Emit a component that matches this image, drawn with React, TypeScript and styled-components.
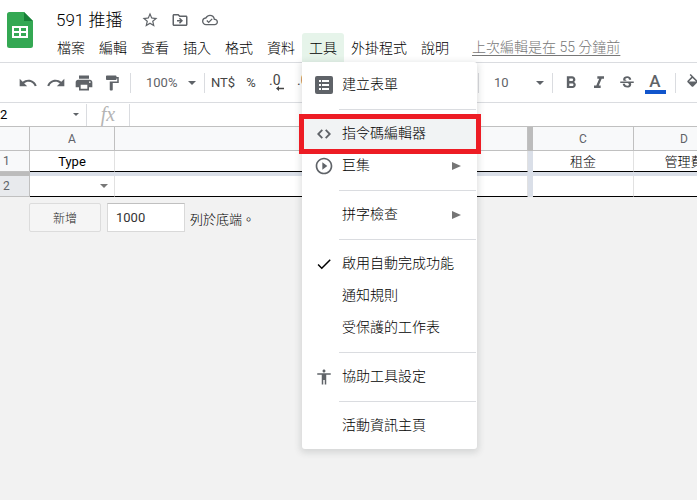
import React from "react";
import styled, { createGlobalStyle } from "styled-components";
import {
  MdAccessibility,
  MdCheck,
  MdFormatBold,
  MdFormatItalic,
  MdFormatPaint,
  MdOutlineCloudDone,
  MdOutlineDriveFileMove,
  MdPlayCircleOutline,
  MdPrint,
  MdRedo,
  MdStarBorder,
  MdStrikethroughS,
  MdUndo,
} from "react-icons/md";

const GlobalStyle = createGlobalStyle`
  * { box-sizing: border-box; }
  html, body, #root { height: 100%; }
  body {
    margin: 0;
    background: #f2f2f2;
    font-family: Roboto, "Noto Sans CJK TC", sans-serif;
    font-size: 13px;
    color: #202124;
  }
  button, input, select { font: inherit; color: inherit; }
`;

const Page = styled.div`
  min-height: 100%;
  overflow: hidden;
`;

const Header = styled.header`
  display: flex;
  background: #fff;
  border-bottom: 1px solid #dadce0;
`;

const HomeLink = styled.a`
  display: block;
  padding: 12px 17px 0 7px;
  svg { display: block; }
`;

const HeaderMain = styled.div`
  flex: 1;
  min-width: 0;
`;

const TitleRow = styled.div`
  display: flex;
  align-items: center;
  height: 33px;
  padding: 6px 0 0 6px;
`;

const Title = styled.h1`
  margin: 0 13px 0 0;
  font-size: 17px;
  line-height: 24px;
  font-weight: 300;
  color: #000;
  white-space: nowrap;
`;

const IconButton = styled.button<{ $width?: number }>`
  display: flex;
  flex: none;
  align-items: center;
  justify-content: center;
  width: ${(p) => p.$width ?? 28}px;
  height: 26px;
  padding: 0;
  border: 0;
  background: none;
  color: #5f6368;
`;

const MenuBar = styled.nav`
  display: flex;
`;

const MenuSlot = styled.div`
  position: relative;
  flex: none;
`;

const MenuTab = styled.button<{ $open?: boolean }>`
  display: block;
  height: 29px;
  padding: 1px 7px 0;
  border: 0;
  border-radius: 3px 3px 0 0;
  background: ${(p) => (p.$open ? "#e6f4ea" : "none")};
  font-size: 14px;
  font-weight: 300;
  line-height: 28px;
  color: #000;
  white-space: nowrap;
`;

const LastEdit = styled.a`
  margin-left: 16px;
  font-size: 14px;
  font-weight: 300;
  line-height: 29px;
  color: #777;
  white-space: nowrap;
  text-underline-offset: 3px;
`;

const Menu = styled.ul`
  position: absolute;
  z-index: 2;
  top: 29px;
  left: 0;
  width: 175px;
  margin: 0;
  padding: 7px 0;
  list-style: none;
  background: #fff;
  border-radius: 0 3px 3px 3px;
  box-shadow: 0 2px 6px 2px rgba(60, 64, 67, 0.15);
`;

const MenuLine = styled.li`
  height: 1px;
  margin: 8px 1px 8px 37px;
  background: #dadce0;
`;

const MenuEntry = styled.li`
  position: relative;
`;

const MenuItem = styled.button<{ $active?: boolean }>`
  display: grid;
  grid-template-columns: 40px 1fr 8px;
  align-items: center;
  width: 100%;
  height: 32px;
  padding: 0 17px 0 0;
  border: 0;
  background: ${(p) => (p.$active ? "#f1f3f4" : "none")};
  font-size: 14px;
  font-weight: 300;
  line-height: 20px;
  text-align: left;
  white-space: nowrap;
  color: #000;
`;

const MenuLabel = styled.span`
  padding-bottom: 2px;
`;

const MenuIcon = styled.span<{ $dark?: boolean }>`
  display: flex;
  justify-content: center;
  padding-left: 4px;
  color: ${(p) => (p.$dark ? "#000" : "#5f6368")};
`;

const Highlight = styled.span`
  position: absolute;
  z-index: 1;
  inset: -4px -4px -4px -3px;
  border: 5px solid #ed1c24;
  pointer-events: none;
`;

const Toolbar = styled.div`
  display: flex;
  align-items: center;
  height: 40px;
  padding-left: 14px;
  background: #fff;
  border-bottom: 1px solid #dadce0;
`;

const ToolGroup = styled.div`
  display: flex;
  flex: none;
  align-items: center;
  & + & { margin-left: 153px; }
`;

const Divider = styled.span`
  flex: none;
  width: 1px;
  height: 20px;
  margin: 0 4px;
  background: #dadce0;
`;

const SelectBox = styled.label`
  position: relative;
  display: block;
  width: 65px;
  color: #5f6368;
  svg {
    position: absolute;
    top: 11px;
    right: 4px;
    pointer-events: none;
  }
`;

const Select = styled.select`
  appearance: none;
  display: block;
  width: 100%;
  height: 26px;
  padding: 0 0 0 11px;
  border: 0;
  background: none;
  font-size: 13px;
`;

const TextTool = styled(IconButton)`
  font-size: 13px;
  color: #444;
`;

const DecimalTool = styled(TextTool)`
  flex-direction: column;
  align-items: flex-start;
  padding-left: 4px;
  font-size: 14px;
  line-height: 12px;
  svg { margin-left: 7px; }
`;

const ColorTool = styled(IconButton)`
  flex-direction: column;
  margin-right: 2px;
  font-size: 17px;
  font-weight: 500;
  line-height: 18px;
  &::after {
    content: "";
    width: 21px;
    height: 4px;
    background: #1155cc;
  }
`;

const FormulaBar = styled.div`
  display: flex;
  align-items: center;
  height: 24px;
  background: #fff;
  border-bottom: 1px solid #c0c0c0;
`;

const NameInput = styled.input`
  width: 73px;
  height: 20px;
  padding: 0;
  border: 0;
  background: none;
  color: #000;
`;

const NameArrow = styled.button`
  display: flex;
  width: 13px;
  padding: 0;
  border: 0;
  background: none;
  color: #5f6368;
`;

const FormulaLabel = styled.label`
  display: block;
  width: 44px;
  height: 22px;
  border: solid #dadce0;
  border-width: 0 1px;
  font: italic 20px/20px "Liberation Serif", serif;
  text-align: center;
  color: #b4b4b4;
`;

const FormulaInput = styled.input`
  flex: 1;
  min-width: 0;
  height: 20px;
  padding: 0 8px;
  border: 0;
  background: none;
`;

const Sheet = styled.table`
  table-layout: fixed;
  width: 735px;
  border-spacing: 0;
  background: #fff;
  line-height: 18px;
  color: #000;
`;

const Col = styled.col<{ $width: number }>`
  width: ${(p) => p.$width}px;
`;

const ColHead = styled.th`
  height: 24px;
  padding: 0;
  background: #f8f9fa;
  border: solid #c0c0c0;
  border-width: 0 1px 1px 0;
  font-size: 12px;
  font-weight: 400;
  color: #5f6368;
`;

const RowHead = styled.th<{ $active?: boolean }>`
  height: 21px;
  padding: 0 0 0 3px;
  background: ${(p) => (p.$active ? "#e8eaed" : "#f8f9fa")};
  border: solid #c0c0c0;
  border-width: 0 1px 1px 0;
  font-size: 12px;
  font-weight: 400;
  text-align: left;
  color: #5f6368;
`;

const Cell = styled.td<{ $light?: boolean }>`
  height: 21px;
  padding: 2px 0 0;
  border-right: 1px solid #e1e1e1;
  border-bottom: 1px solid #000;
  font-weight: ${(p) => (p.$light ? 300 : 400)};
  text-align: center;
  white-space: nowrap;
`;

const Freeze = styled.td<{ $head?: boolean }>`
  height: 4px;
  padding: 0;
  background: ${(p) => (p.$head ? "#bcbcbc" : "#dadfe8")};
`;

const CellMenu = styled.button`
  display: flex;
  margin-left: auto;
  padding: 0 6px 2px 0;
  border: 0;
  background: none;
  color: #777;
`;

const AddRows = styled.form`
  display: flex;
  align-items: center;
  padding: 6px 0 0 29px;
  color: #333;
`;

const AddButton = styled.button`
  width: 72px;
  height: 29px;
  margin-right: 6px;
  padding: 0;
  border: 1px solid #dcdcdc;
  border-radius: 2px;
  background: #f5f5f5;
  font-size: 12px;
  font-weight: 300;
  color: #222;
`;

const RowsInput = styled.input`
  width: 78px;
  height: 29px;
  margin-right: 5px;
  padding: 0 8px;
  border: 1px solid #d9d9d9;
  border-top-color: #c0c0c0;
  background: #fff;
  color: #333;
`;

const AddLabel = styled.label`
  padding-top: 4px;
  font-weight: 300;
  line-height: 20px;
  color: #000;
`;

const Caret = ({ size = 8 }: { size?: number }) => (
  <svg width={size} height={size / 2} viewBox="0 0 8 4" aria-hidden="true">
    <path d="M0 0h8L4 4z" fill="currentColor" />
  </svg>
);

const SubArrow = () => (
  <svg width="9" height="8" viewBox="0 0 9 8" aria-hidden="true">
    <path d="M0 0l9 4-9 4z" fill="#757575" />
  </svg>
);

const SheetsLogo = () => (
  <svg width="26" height="36" viewBox="0 0 26 36" aria-hidden="true">
    <path d="M2.5 0H17l9 9v24.5a2.5 2.5 0 0 1-2.5 2.5h-21A2.5 2.5 0 0 1 0 33.5v-31A2.5 2.5 0 0 1 2.5 0z" fill="#34a853" />
    <path d="M17 0l9 9h-9z" fill="#188038" />
    <path fillRule="evenodd" d="M5 14h16v12H5zM7 16v3h5v-3zM14 16v3h5v-3zM7 21v3h5v-3zM14 21v3h5v-3z" fill="#fff" />
  </svg>
);

const FormIcon = () => (
  <svg width="18" height="18" viewBox="0 0 18 18" aria-hidden="true">
    <rect width="18" height="18" rx="2" fill="currentColor" />
    <path d="M4 4h2v2H4zM7 4h7v2H7zM4 8h2v2H4zM7 8h7v2H7zM4 12h2v2H4zM7 12h7v2H7z" fill="#fff" />
  </svg>
);

const CodeIcon = () => (
  <svg width="14" height="10" viewBox="0 0 14 10" aria-hidden="true">
    <path d="M5.3 0.8L1.2 5l4.1 4.200M8.700 0.8L12.800 5 8.700 9.200" fill="none" stroke="currentColor" strokeWidth="1.8" />
  </svg>
);

const FillIcon = () => (
  <svg width="18" height="18" viewBox="0 0 24 24" fill="currentColor" aria-hidden="true">
    <path d="M16.56 8.94L7.62 0 6.21 1.41l2.38 2.38-5.15 5.15c-.59.59-.59 1.54 0 2.12l5.5 5.5c.29.29.68.44 1.06.44s.77-.15 1.06-.44l5.5-5.5c.59-.58.59-1.53 0-2.12zM5.21 10L10 5.21 14.79 10H5.21zM19 11.5s-2 2.17-2 3.5c0 1.1.9 2 2 2s2-.9 2-2c0-1.33-2-3.5-2-3.5z" />
  </svg>
);

const DecimalArrow = ({ right }: { right?: boolean }) => (
  <svg width="8" height="5" viewBox="0 0 8 5" aria-hidden="true">
    <path d={right ? "M8 2.5L5 0v1.7H0v1.6h5V5z" : "M0 2.5L3 0v1.7h5v1.6H3V5z"} fill="currentColor" />
  </svg>
);

type Entry = {
  label: string;
  icon?: React.ReactNode;
  dark?: boolean;
  sub?: boolean;
  marked?: boolean;
};

const toolMenu: Entry[][] = [
  [{ label: "建立表單", icon: <FormIcon /> }],
  [
    { label: "指令碼編輯器", icon: <CodeIcon />, marked: true },
    { label: "巨集", icon: <MdPlayCircleOutline size={20} />, sub: true },
  ],
  [{ label: "拼字檢查", sub: true }],
  [
    { label: "啟用自動完成功能", icon: <MdCheck size={18} />, dark: true },
    { label: "通知規則" },
    { label: "受保護的工作表" },
  ],
  [{ label: "協助工具設定", icon: <MdAccessibility size={18} /> }],
  [{ label: "活動資訊主頁" }],
];

const tabs = ["檔案", "編輯", "查看", "插入", "格式", "資料", "工具", "外掛程式", "說明"];

const ToolsMenu = () => (
  <Menu role="menu">
    {toolMenu.map((section, i) => (
      <React.Fragment key={i}>
        {i > 0 && <MenuLine role="separator" />}
        {section.map((e) => (
          <MenuEntry key={e.label} role="none">
            <MenuItem role="menuitem" $active={e.marked}>
              <MenuIcon $dark={e.dark}>{e.icon}</MenuIcon>
              <MenuLabel>{e.label}</MenuLabel>
              {e.sub && <SubArrow />}
            </MenuItem>
            {e.marked && <Highlight />}
          </MenuEntry>
        ))}
      </React.Fragment>
    ))}
  </Menu>
);

export default function App() {
  return (
    <Page>
      <GlobalStyle />
      <Header>
        <HomeLink href="#home"><SheetsLogo /></HomeLink>
        <HeaderMain>
          <TitleRow>
            <Title>591 推播</Title>
            <IconButton $width={30}><MdStarBorder size={18} /></IconButton>
            <IconButton $width={30}><MdOutlineDriveFileMove size={18} /></IconButton>
            <IconButton $width={30}><MdOutlineCloudDone size={16} /></IconButton>
          </TitleRow>
          <MenuBar>
            {tabs.map((t) => (
              <MenuSlot key={t}>
                <MenuTab $open={t === "工具"}>{t}</MenuTab>
                {t === "工具" && <ToolsMenu />}
              </MenuSlot>
            ))}
            <LastEdit href="#history">上次編輯是在 55 分鐘前</LastEdit>
          </MenuBar>
        </HeaderMain>
      </Header>

      <Toolbar>
        <ToolGroup>
          <IconButton><MdUndo size={20} /></IconButton>
          <IconButton><MdRedo size={20} /></IconButton>
          <IconButton><MdPrint size={20} /></IconButton>
          <IconButton><MdFormatPaint size={18} /></IconButton>
          <Divider />
          <SelectBox>
            <Select defaultValue="100%"><option>100%</option></Select>
            <Caret />
          </SelectBox>
          <Divider />
          <TextTool>NT$</TextTool>
          <TextTool>%</TextTool>
          <DecimalTool>.0<DecimalArrow /></DecimalTool>
          <DecimalTool>.0<DecimalArrow right /></DecimalTool>
        </ToolGroup>
        <ToolGroup>
          <Divider />
          <SelectBox>
            <Select defaultValue="10"><option>10</option></Select>
            <Caret />
          </SelectBox>
          <Divider />
          <IconButton><MdFormatBold size={20} /></IconButton>
          <IconButton><MdFormatItalic size={20} /></IconButton>
          <IconButton><MdStrikethroughS size={18} /></IconButton>
          <ColorTool>A</ColorTool>
          <Divider />
          <IconButton><FillIcon /></IconButton>
        </ToolGroup>
      </Toolbar>

      <FormulaBar>
        <NameInput defaultValue="2" />
        <NameArrow><Caret size={6} /></NameArrow>
        <FormulaLabel htmlFor="formula">fx</FormulaLabel>
        <FormulaInput id="formula" />
      </FormulaBar>

      <Sheet>
        <colgroup>
          <Col $width={30} />
          <Col $width={85} />
          <Col $width={413} />
          <Col $width={5} />
          <Col $width={101} />
          <Col $width={101} />
        </colgroup>
        <thead>
          <tr>
            <ColHead />
            <ColHead>A</ColHead>
            <ColHead />
            <Freeze $head />
            <ColHead>C</ColHead>
            <ColHead>D</ColHead>
          </tr>
        </thead>
        <tbody>
          <tr>
            <RowHead>1</RowHead>
            <Cell>Type</Cell>
            <Cell />
            <Freeze />
            <Cell $light>租金</Cell>
            <Cell $light>管理費</Cell>
          </tr>
          <tr>
            <Freeze $head />
            <Freeze colSpan={5} />
          </tr>
          <tr>
            <RowHead $active>2</RowHead>
            <Cell><CellMenu><Caret /></CellMenu></Cell>
            <Cell />
            <Freeze />
            <Cell />
            <Cell />
          </tr>
        </tbody>
      </Sheet>

      <AddRows>
        <AddButton type="button">新增</AddButton>
        <RowsInput id="rows" defaultValue="1000" />
        <AddLabel htmlFor="rows">列於底端。</AddLabel>
      </AddRows>
    </Page>
  );
}
